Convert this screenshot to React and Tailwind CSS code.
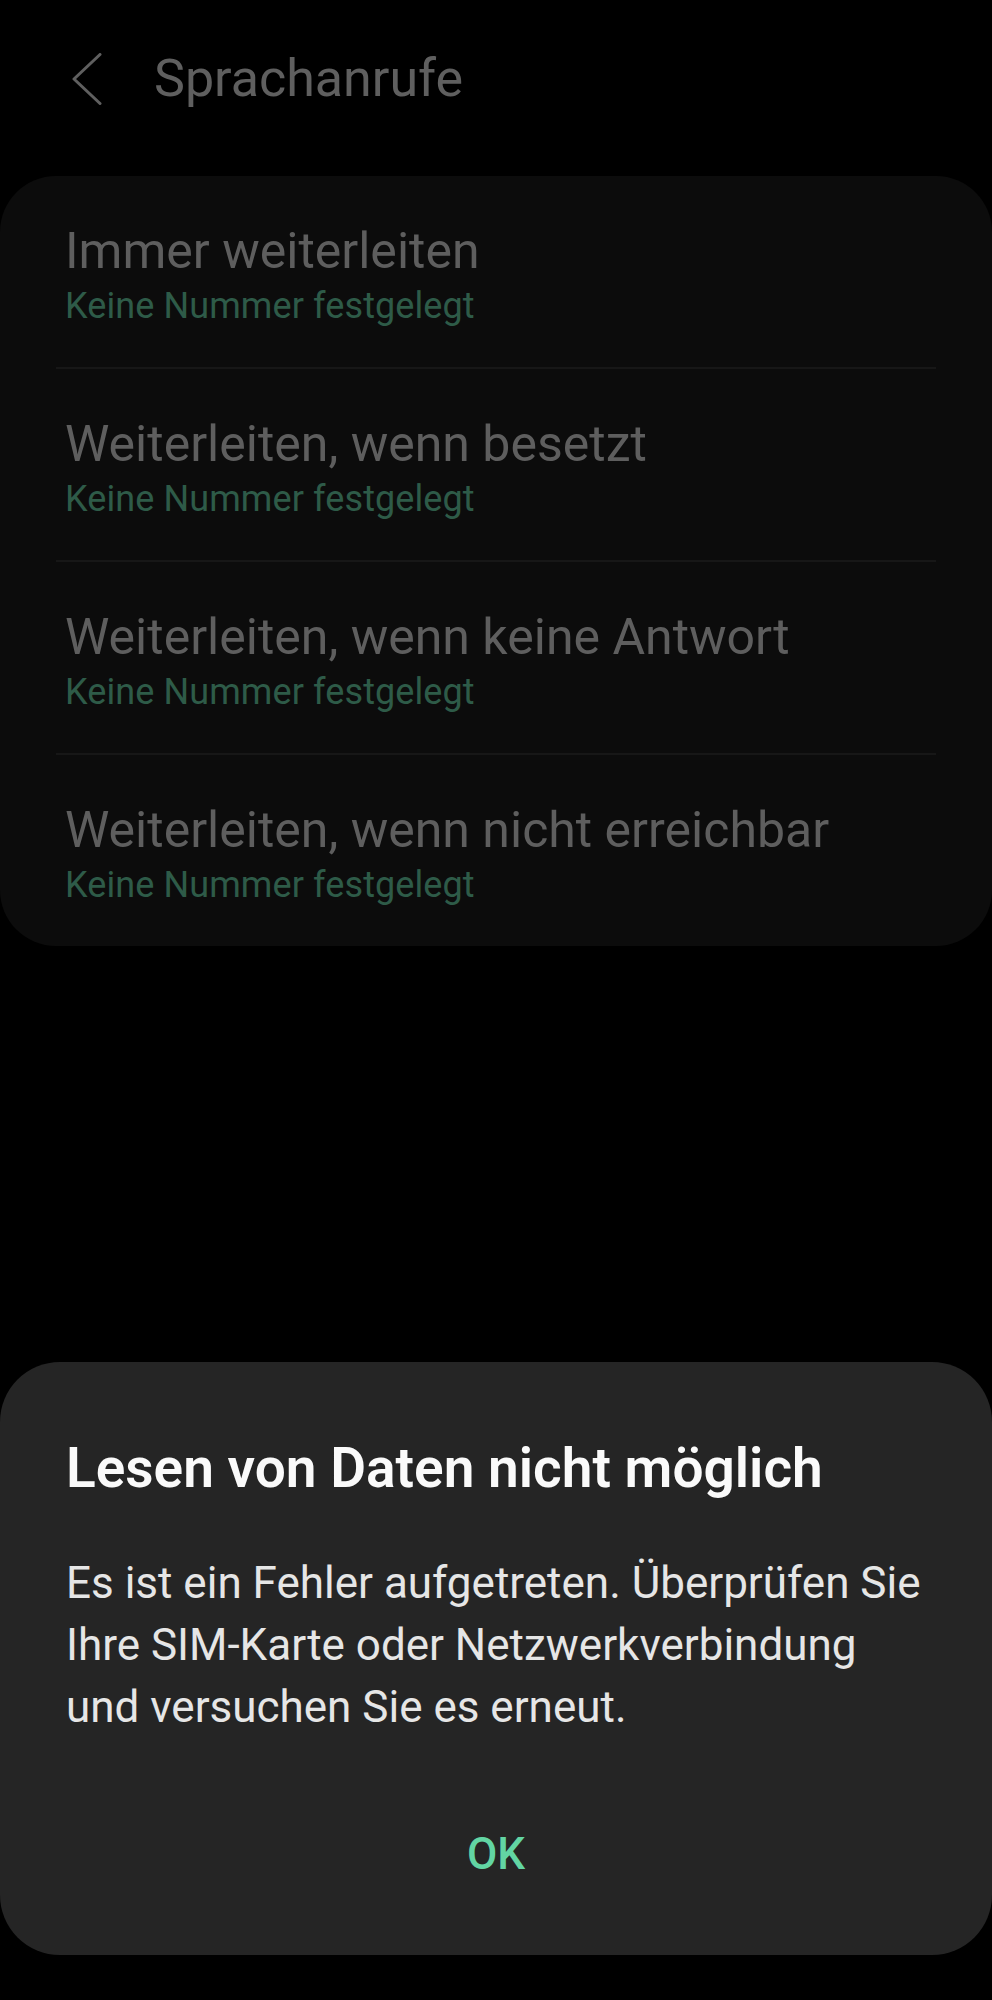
import { useState } from 'react';

const forwardOptions = [
  'Immer weiterleiten',
  'Weiterleiten, wenn besetzt',
  'Weiterleiten, wenn keine Antwort',
  'Weiterleiten, wenn nicht erreichbar',
];

function BackChevron() {
  return (
    <svg width="30" height="52" viewBox="0 0 30 52" fill="none">
      <polyline points="28,1.5 2,26 28,50.5" stroke="#5f5f5f" strokeWidth="3" strokeLinecap="round" strokeLinejoin="round" />
    </svg>
  );
}

export default function App() {
  const [dialogOpen, setDialogOpen] = useState(true);

  return (
    <div className="min-h-[2000px] bg-black relative font-[Roboto,sans-serif]">
      {/* Header */}
      <header className="h-[158px] flex items-center pl-[72px]">
        <BackChevron />
        <h1 className="ml-[52px] text-[52px] leading-[60px] text-[#5f5f5f]">Sprachanrufe</h1>
      </header>

      {/* Call forwarding list */}
      <div className="mt-[18px] bg-[#0c0c0c] rounded-[56px] flex flex-col">
        {forwardOptions.map((title, i) => (
          <div key={title} className="flex flex-col">
            {i > 0 && <div className="mx-[56px] h-[2px] bg-[#171717]" />}
            <div className="pl-[65px] pt-[46px] pb-[40px] flex flex-col">
              <span className="text-[50px] leading-[58px] text-[#5e5e5e]">{title}</span>
              <span className="mt-[5px] text-[36px] leading-[42px] tracking-[0.1px] text-[#2e5b48]">Keine Nummer festgelegt</span>
            </div>
          </div>
        ))}
      </div>

      {/* Error dialog */}
      {dialogOpen && (
        <div className="absolute left-0 right-0 bottom-[45px] bg-[#252525] rounded-[60px] px-[66px] pt-[74px] pb-[75px] flex flex-col">
          <h2 className="text-[55px] leading-[64px] font-semibold text-[#fafafa]">Lesen von Daten nicht möglich</h2>
          <p className="mt-[52px] text-[44px] leading-[62px] text-[#e6e6e6]">
            Es ist ein Fehler aufgetreten. Überprüfen Sie<br />
            Ihre SIM-Karte oder Netzwerkverbindung<br />
            und versuchen Sie es erneut.
          </p>
          <button
            onClick={() => setDialogOpen(false)}
            className="mt-[90px] self-center text-[44px] leading-[52px] font-medium text-[#62d5a3]"
          >
            OK
          </button>
        </div>
      )}
    </div>
  );
}
